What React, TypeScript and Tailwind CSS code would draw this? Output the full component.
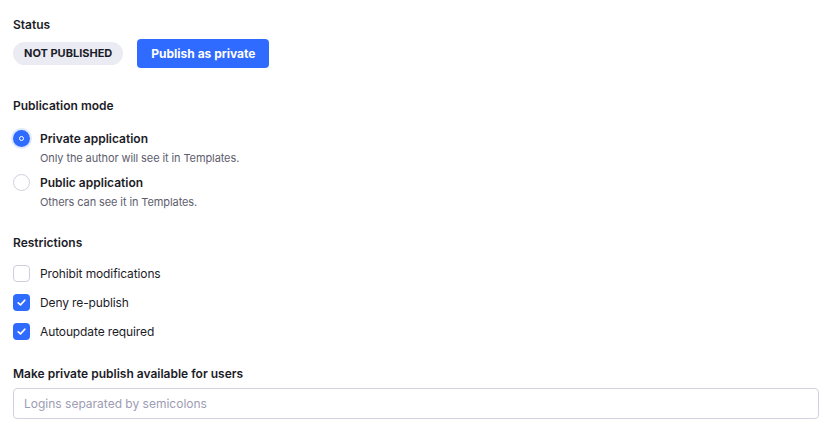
import React from "react";

function Check() {
  return (
    <svg width="11" height="11" viewBox="0 0 11 11" fill="none">
      <path d="M2.2 5.8 L4.5 7.9 L8.8 3.2" stroke="white" strokeWidth="1.7" strokeLinecap="round" strokeLinejoin="round" />
    </svg>
  );
}

function CheckRow({ checked, label }: { checked: boolean; label: string }) {
  return (
    <div className="flex items-center gap-[10px] h-[17px]">
      {checked ? (
        <div className="w-[17px] h-[17px] rounded-[4px] bg-[#2f6bff] flex items-center justify-center">
          <Check />
        </div>
      ) : (
        <div className="w-[17px] h-[17px] rounded-[4px] border border-[#cfcfdc] bg-white" />
      )}
      <span className="text-[12px] tracking-[-0.12px] text-[#1c1c28]">{label}</span>
    </div>
  );
}

function RadioRow({ checked, label, desc }: { checked: boolean; label: string; desc: string }) {
  return (
    <div className="flex gap-[10px]">
      {checked ? (
        <div className="w-[17px] h-[17px] rounded-full bg-[#2f6bff] flex items-center justify-center shadow-[0_0_0_2px_rgba(47,107,255,0.15)]">
          <div className="w-[5px] h-[5px] rounded-full border-[1.5px] border-white" />
        </div>
      ) : (
        <div className="w-[17px] h-[17px] rounded-full border border-[#cfcfdc] bg-white" />
      )}
      <div className="flex flex-col">
        <span className="text-[12px] font-semibold text-[#1c1c28] leading-[17px]">{label}</span>
        <span className="text-[11px] tracking-[-0.1px] text-[#5d5d6e] leading-[14px] mt-[4px]">{desc}</span>
      </div>
    </div>
  );
}

export default function App() {
  return (
    <div
      className="w-[835px] h-[430px] bg-white px-[13px] pt-[17px]"
      style={{ fontFamily: "Inter, 'Noto Sans', sans-serif" }}
    >
      <div className="text-[12px] font-semibold text-[#1c1c28] leading-[15px]">Status</div>
      <div className="flex items-center gap-[14px] mt-[7px]">
        <div className="h-[23px] px-[11px] rounded-full bg-[#ebebf3] flex items-center text-[11px] font-bold text-[#1c1c28]">
          NOT PUBLISHED
        </div>
        <button className="h-[29px] px-[14px] rounded-[4px] bg-[#2f6bff] text-white text-[12px] font-bold">
          Publish as private
        </button>
      </div>

      <div className="text-[12px] font-semibold text-[#1c1c28] leading-[15px] mt-[30px]">Publication mode</div>
      <div className="flex flex-col gap-[9px] mt-[17px]">
        <RadioRow checked label="Private application" desc="Only the author will see it in Templates." />
        <RadioRow checked={false} label="Public application" desc="Others can see it in Templates." />
      </div>

      <div className="text-[12px] font-semibold text-[#1c1c28] leading-[15px] mt-[26px]">Restrictions</div>
      <div className="flex flex-col gap-[12px] mt-[15px]">
        <CheckRow checked={false} label="Prohibit modifications" />
        <CheckRow checked label="Deny re-publish" />
        <CheckRow checked label="Autoupdate required" />
      </div>

      <div className="text-[12px] font-semibold text-[#1c1c28] leading-[15px] mt-[26px]">
        Make private publish available for users
      </div>
      <input
        className="mt-[7px] w-[806px] h-[31px] rounded-[4px] border border-[#d2d2de] px-[10px] text-[12px] outline-none placeholder:text-[#9d9db3]"
        placeholder="Logins separated by semicolons"
      />
    </div>
  );
}
